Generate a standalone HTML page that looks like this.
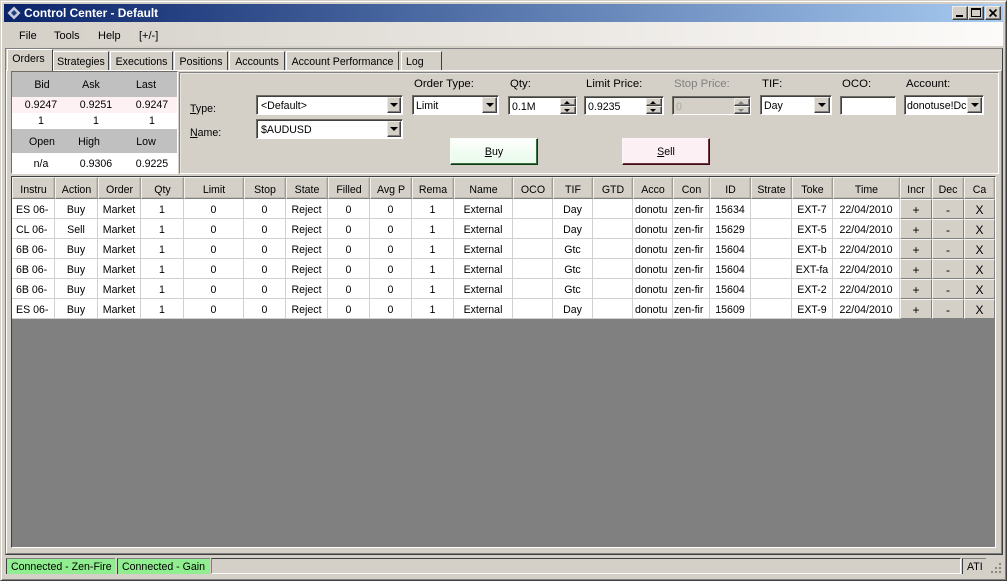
<!DOCTYPE html>
<html><head><meta charset="utf-8"><style>
html,body{margin:0;padding:0;background:#d4d0c8}
#w{position:relative;width:1007px;height:581px;overflow:hidden;background:#d4d0c8;font:10.6px/13px "Liberation Sans",sans-serif;color:#000}
#w div,#w span.a{position:absolute;box-sizing:border-box}
.t{white-space:nowrap;line-height:15px}
.lb{font-size:11.4px}
.c{text-align:center}
.ctl{background:#fff;border:1px solid;border-color:#6f6c66 #fff #fff #6f6c66;box-shadow:inset 1px 1px 0 #404040;height:20px;padding:4px 0 0 4px;white-space:nowrap;overflow:hidden}
.btn{background:#d4d0c8;border:1px solid;border-color:#eeeae4 #404040 #404040 #eeeae4;box-shadow:inset -1px -1px 0 #808080}
.arr{width:0;height:0;border-left:4px solid transparent;border-right:4px solid transparent;border-top:4px solid #000}
.tab{top:51px;height:19px;background:#d4d0c8;border:1px solid;border-color:#fff #404040 transparent #fff;border-bottom:0;text-align:center;padding-top:4px;white-space:nowrap}
table{position:absolute;left:12px;top:177px;width:983px;border-collapse:separate;border-spacing:0;table-layout:fixed;font:10.6px/13px "Liberation Sans",sans-serif}
th{height:22px;box-sizing:border-box;font-weight:normal;background:#d4d0c8;border:1px solid;border-color:#f4f2ee #a09c96 #808080 #f4f2ee;padding:4px 0 0;overflow:hidden;white-space:nowrap;text-align:center;box-shadow:inset -1px -1px 0 #c0bcb4}
td{height:20px;box-sizing:border-box;background:#fff;border-right:1px solid #d0d0d0;border-bottom:1px solid #d0d0d0;padding:3px 0 0;overflow:hidden;white-space:nowrap;text-align:center}
td.l{text-align:left;padding-left:4px}
td.b{background:#d4d0c8;border:1px solid;border-color:#f8f6f2 #808080 #808080 #f8f6f2;padding-top:2px;font-size:12px}
u{text-decoration:underline}
</style></head><body><div id="w">

<div style="left:0;top:0;width:1007px;height:581px;border:1px solid;border-color:#d4d0c8 #404040 #404040 #d4d0c8;box-shadow:inset 1px 1px 0 #fff,inset -1px -1px 0 #808080"></div>

<div style="left:4px;top:4px;width:999px;height:18px;background:linear-gradient(90deg,#0a246a,#a6caf0)"></div>
<svg style="position:absolute;left:6px;top:5px" width="16" height="16" viewBox="0 0 16 16"><path d="M8 1.5 14.5 8 8 14.5 1.5 8Z" fill="#c8ccdc"/><path d="M8 5 11 8 8 11 5 8Z" fill="#22407f"/></svg>
<div class="t" style="left:24px;top:6px;color:#fff;font-weight:bold;font-size:11.9px">Control Center - Default</div>
<div class="btn" style="left:952px;top:6px;width:16px;height:14px"><div style="left:3px;top:8px;width:7px;height:2px;background:#000"></div></div>
<div class="btn" style="left:968px;top:6px;width:16px;height:14px"><div style="left:2px;top:1px;width:10px;height:9px;border:1px solid #000;border-top-width:2px"></div></div>
<div class="btn" style="left:985px;top:6px;width:16px;height:14px"><svg style="position:absolute;left:2px;top:1px" width="10" height="10" viewBox="0 0 10 10"><path d="M1.5 1.5 8.5 8.5M8.5 1.5 1.5 8.5" stroke="#000" stroke-width="1.7"/></svg></div>

<div style="left:4px;top:22px;width:999px;height:24px;background:linear-gradient(90deg,#d4d0c8 0%,#e6e3de 45%,#fdfbf9 100%)"></div>
<div class="t" style="left:19px;top:29px;font-size:11px">File</div>
<div class="t" style="left:54px;top:29px;font-size:11px">Tools</div>
<div class="t" style="left:98px;top:29px;font-size:11px">Help</div>
<div class="t" style="left:139px;top:29px;font-size:11px">[+/-]</div>

<div style="left:5px;top:46px;width:998px;height:508px;background:#d4d0c8"></div>
<div style="left:5px;top:48px;width:998px;height:507px;border:1px solid;border-color:#808080 #404040 #404040 #808080"></div>

<div class="tab" style="left:53px;width:56px">Strategies</div>
<div class="tab" style="left:110px;width:63px">Executions</div>
<div class="tab" style="left:174px;width:54px">Positions</div>
<div class="tab" style="left:229px;width:56px">Accounts</div>
<div class="tab" style="left:286px;width:113px">Account Performance</div>
<div class="tab" style="left:401px;width:41px;text-align:left;padding-left:4px">Log</div>
<div style="left:6px;top:70px;width:996px;height:484px;background:#d4d0c8;border:1px solid;border-color:#fff #808080 #808080 #fff"></div>
<div class="tab" style="left:7px;top:49px;width:46px;height:22px;border-right-color:#404040;border-bottom:0;z-index:2;padding-top:3px;padding-right:3px">Orders</div>

<div style="left:11px;top:71px;width:167px;height:103px;border:1px solid;border-color:#6f6c66 #fff #fff #6f6c66;background:#fff"></div>
<div style="left:12px;top:72px;width:165px;height:25px;background:#c0c0c0"></div>
<div style="left:12px;top:97px;width:165px;height:16px;background:#fdf1f3"></div>
<div style="left:12px;top:129px;width:165px;height:24px;background:#c0c0c0"></div>
<div class="c t" style="left:12px;top:78px;width:60px">Bid</div>
<div class="c t" style="left:66px;top:78px;width:50px">Ask</div>
<div class="c t" style="left:121px;top:78px;width:50px">Last</div>
<div class="c t" style="left:16px;top:98px;width:50px">0.9247</div>
<div class="c t" style="left:71px;top:98px;width:50px">0.9251</div>
<div class="c t" style="left:127px;top:98px;width:50px">0.9247</div>
<div class="c t" style="left:16px;top:114px;width:50px">1</div>
<div class="c t" style="left:71px;top:114px;width:50px">1</div>
<div class="c t" style="left:127px;top:114px;width:50px">1</div>
<div class="c t" style="left:17px;top:135px;width:50px">Open</div>
<div class="c t" style="left:64px;top:135px;width:50px">High</div>
<div class="c t" style="left:121px;top:135px;width:50px">Low</div>
<div class="c t" style="left:16px;top:157px;width:50px">n/a</div>
<div class="c t" style="left:71px;top:157px;width:50px">0.9306</div>
<div class="c t" style="left:127px;top:157px;width:50px">0.9225</div>

<div style="left:179px;top:72px;width:820px;height:102px;border:1px solid;border-color:#808080 #fff #fff #808080;box-shadow:inset 1px 1px 0 #e8e5df"></div>
<div class="t" style="left:190px;top:102px"><u>T</u>ype:</div>
<div class="t" style="left:190px;top:126px"><u>N</u>ame:</div>

<div class="ctl" style="left:256px;top:95px;width:147px">&lt;Default&gt;</div>
<div class="btn" style="left:387px;top:97px;width:14px;height:16px"><div class="arr" style="left:2px;top:5px"></div></div>
<div class="ctl" style="left:256px;top:119px;width:147px">$AUDUSD</div>
<div class="btn" style="left:387px;top:121px;width:14px;height:16px"><div class="arr" style="left:2px;top:5px"></div></div>

<div class="t lb" style="left:414px;top:77px">Order Type:</div>
<div class="ctl" style="left:412px;top:95px;width:87px;padding-left:3px">Limit</div>
<div class="btn" style="left:482px;top:97px;width:15px;height:16px"><div class="arr" style="left:3px;top:5px"></div></div>

<div class="t lb" style="left:510px;top:77px">Qty:</div>
<div class="ctl" style="left:508px;top:96px;width:69px;padding-left:3px;height:19px">0.1M</div>
<div class="btn" style="left:560px;top:98px;width:16px;height:8px"><div class="arr" style="left:3px;top:2px;border-top:0;border-bottom:3px solid #000;border-left-width:3px;border-right-width:3px"></div></div>
<div class="btn" style="left:560px;top:106px;width:16px;height:8px"><div class="arr" style="left:3px;top:2px;border-top-width:3px;border-left-width:3px;border-right-width:3px"></div></div>

<div class="t lb" style="left:586px;top:77px">Limit Price:</div>
<div class="ctl" style="left:584px;top:96px;width:80px;padding-left:3px;height:19px">0.9235</div>
<div class="btn" style="left:646px;top:98px;width:16px;height:8px"><div class="arr" style="left:3px;top:2px;border-top:0;border-bottom:3px solid #000;border-left-width:3px;border-right-width:3px"></div></div>
<div class="btn" style="left:646px;top:106px;width:16px;height:8px"><div class="arr" style="left:3px;top:2px;border-top-width:3px;border-left-width:3px;border-right-width:3px"></div></div>

<div class="t lb" style="left:674px;top:77px;color:#808080">Stop Price:</div>
<div class="ctl" style="left:672px;top:96px;width:79px;padding-left:3px;height:19px;background:#d4d0c8;color:#aca899">0</div>
<div class="btn" style="left:734px;top:98px;width:16px;height:8px"><div class="arr" style="left:3px;top:2px;border-top:0;border-bottom:3px solid #808080;border-left-width:3px;border-right-width:3px"></div></div>
<div class="btn" style="left:734px;top:106px;width:16px;height:8px"><div class="arr" style="left:3px;top:2px;border-top:3px solid #808080;border-left-width:3px;border-right-width:3px"></div></div>

<div class="t lb" style="left:762px;top:77px">TIF:</div>
<div class="ctl" style="left:760px;top:95px;width:72px;padding-left:3px">Day</div>
<div class="btn" style="left:814px;top:97px;width:16px;height:16px"><div class="arr" style="left:3px;top:5px"></div></div>

<div class="t lb" style="left:842px;top:77px">OCO:</div>
<div class="ctl" style="left:840px;top:96px;width:56px;height:19px"></div>

<div class="t lb" style="left:906px;top:77px">Account:</div>
<div class="ctl" style="left:904px;top:95px;width:80px;padding-left:2px">donotuse!Dc</div>
<div class="btn" style="left:967px;top:97px;width:15px;height:16px"><div class="arr" style="left:3px;top:5px"></div></div>

<div style="left:450px;top:138px;width:88px;height:27px;background:linear-gradient(#fff,#f1fcf2 50%,#eafbec);border:1px solid;border-color:#f4fff4 #0a3a10 #0a3a10 #f4fff4;box-shadow:inset -1px -1px 0 #3c6e44;text-align:center;padding-top:7px"><u>B</u>uy</div>
<div style="left:622px;top:138px;width:88px;height:27px;background:#fdf0f4;border:1px solid;border-color:#fff5f8 #3c0a18 #3c0a18 #fff5f8;box-shadow:inset -1px -1px 0 #70343f;text-align:center;padding-top:7px"><u>S</u>ell</div>

<div style="left:11px;top:176px;width:985px;height:372px;background:#808080;border:1px solid;border-color:#404040 #fff #fff #404040"></div>

<table>
<colgroup><col style="width:43px"><col style="width:43px"><col style="width:43px"><col style="width:43px"><col style="width:60px"><col style="width:42px"><col style="width:42px"><col style="width:42px"><col style="width:42px"><col style="width:42px"><col style="width:59px"><col style="width:40px"><col style="width:40px"><col style="width:40px"><col style="width:40px"><col style="width:37px"><col style="width:41px"><col style="width:41px"><col style="width:41px"><col style="width:67px"><col style="width:32px"><col style="width:32px"><col style="width:31px"></colgroup>
<tr><th>Instru</th><th>Action</th><th>Order</th><th>Qty</th><th>Limit</th><th>Stop</th><th>State</th><th>Filled</th><th>Avg P</th><th>Rema</th><th>Name</th><th>OCO</th><th>TIF</th><th>GTD</th><th>Acco</th><th>Con</th><th>ID</th><th>Strate</th><th>Toke</th><th>Time</th><th>Incr</th><th>Dec</th><th>Ca</th></tr>
<tr><td class="l">ES 06-</td><td>Buy</td><td>Market</td><td>1</td><td>0</td><td>0</td><td>Reject</td><td>0</td><td>0</td><td>1</td><td>External</td><td></td><td>Day</td><td></td><td class="l" style="padding-left:2px">donotu</td><td class="l" style="padding-left:1px">zen-fir</td><td>15634</td><td></td><td>EXT-7</td><td>22/04/2010</td><td class="b">+</td><td class="b">-</td><td class="b">X</td></tr>
<tr><td class="l">CL 06-</td><td>Sell</td><td>Market</td><td>1</td><td>0</td><td>0</td><td>Reject</td><td>0</td><td>0</td><td>1</td><td>External</td><td></td><td>Day</td><td></td><td class="l" style="padding-left:2px">donotu</td><td class="l" style="padding-left:1px">zen-fir</td><td>15629</td><td></td><td>EXT-5</td><td>22/04/2010</td><td class="b">+</td><td class="b">-</td><td class="b">X</td></tr>
<tr><td class="l">6B 06-</td><td>Buy</td><td>Market</td><td>1</td><td>0</td><td>0</td><td>Reject</td><td>0</td><td>0</td><td>1</td><td>External</td><td></td><td>Gtc</td><td></td><td class="l" style="padding-left:2px">donotu</td><td class="l" style="padding-left:1px">zen-fir</td><td>15604</td><td></td><td>EXT-b</td><td>22/04/2010</td><td class="b">+</td><td class="b">-</td><td class="b">X</td></tr>
<tr><td class="l">6B 06-</td><td>Buy</td><td>Market</td><td>1</td><td>0</td><td>0</td><td>Reject</td><td>0</td><td>0</td><td>1</td><td>External</td><td></td><td>Gtc</td><td></td><td class="l" style="padding-left:2px">donotu</td><td class="l" style="padding-left:1px">zen-fir</td><td>15604</td><td></td><td>EXT-fa</td><td>22/04/2010</td><td class="b">+</td><td class="b">-</td><td class="b">X</td></tr>
<tr><td class="l">6B 06-</td><td>Buy</td><td>Market</td><td>1</td><td>0</td><td>0</td><td>Reject</td><td>0</td><td>0</td><td>1</td><td>External</td><td></td><td>Gtc</td><td></td><td class="l" style="padding-left:2px">donotu</td><td class="l" style="padding-left:1px">zen-fir</td><td>15604</td><td></td><td>EXT-2</td><td>22/04/2010</td><td class="b">+</td><td class="b">-</td><td class="b">X</td></tr>
<tr><td class="l">ES 06-</td><td>Buy</td><td>Market</td><td>1</td><td>0</td><td>0</td><td>Reject</td><td>0</td><td>0</td><td>1</td><td>External</td><td></td><td>Day</td><td></td><td class="l" style="padding-left:2px">donotu</td><td class="l" style="padding-left:1px">zen-fir</td><td>15609</td><td></td><td>EXT-9</td><td>22/04/2010</td><td class="b">+</td><td class="b">-</td><td class="b">X</td></tr>
</table>

<div style="left:4px;top:555px;width:999px;height:22px;background:#d4d0c8"></div>
<div class="t" style="left:6px;top:558px;width:109px;height:16px;background:#90ee90;border-left:1px solid #404040;border-top:1px solid #808080;padding:1px 0 0 4px">Connected - Zen-Fire</div>
<div class="t" style="left:117px;top:558px;width:93px;height:16px;background:#90ee90;border-left:1px solid #404040;border-top:1px solid #808080;padding:1px 0 0 4px">Connected - Gain</div>
<div style="left:211px;top:558px;width:750px;height:16px;border-left:1px solid #808080;border-top:1px solid #404040;border-right:1px solid #fff;border-bottom:1px solid #fff"></div>
<div class="t" style="left:962px;top:558px;width:24px;height:16px;border-left:1px solid #404040;border-top:1px solid #808080;padding:1px 0 0 4px">ATI</div>
<svg style="position:absolute;left:990px;top:562px" width="12" height="12" viewBox="0 0 12 12"><path d="M9 1h2v2H9zM5 5h2v2H5zM9 5h2v2H9zM1 9h2v2H1zM5 9h2v2H5zM9 9h2v2H9z" fill="#8a8780"/></svg>
</div></body></html>
